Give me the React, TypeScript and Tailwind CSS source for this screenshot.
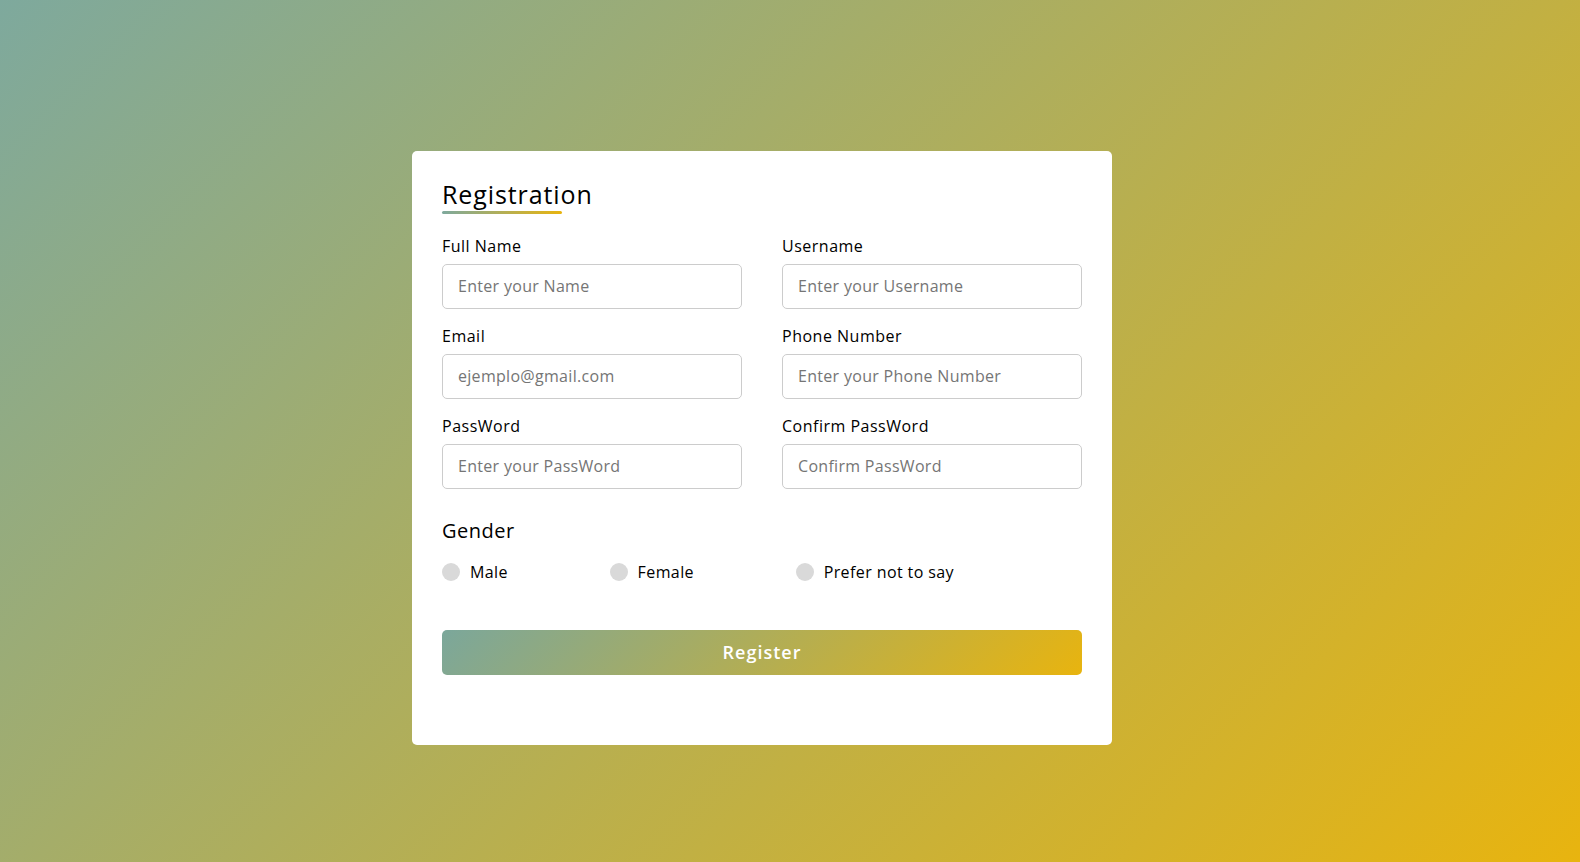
import React from 'react';

const font = { fontFamily: '"Open Sans", "Noto Sans", sans-serif' };

interface Field {
  label: string;
  placeholder: string;
}

const fields: Field[] = [
  { label: 'Full Name', placeholder: 'Enter your Name' },
  { label: 'Username', placeholder: 'Enter your Username' },
  { label: 'Email', placeholder: 'ejemplo@gmail.com' },
  { label: 'Phone Number', placeholder: 'Enter your Phone Number' },
  { label: 'PassWord', placeholder: 'Enter your PassWord' },
  { label: 'Confirm PassWord', placeholder: 'Confirm PassWord' },
];

const genders = ['Male', 'Female', 'Prefer not to say'];

export default function App() {
  return (
    <div
      className="min-h-screen w-full bg-[linear-gradient(135deg,#7ea99d,#e8b40f)] flex justify-center items-start pt-[151px] pr-[56px]"
      style={font}
    >
      <div className="w-[700px] bg-white rounded-[5px] px-[30px] pt-[25px] pb-[70px]">
        <div className="relative inline-block text-[25px] font-medium leading-[37.5px] tracking-[0.9px] text-black">
          Registration
          <span className="absolute left-0 bottom-[0px] h-[3px] w-[120px] rounded-[3px] bg-[linear-gradient(90deg,#7ea99d,#e8b40f)]" />
        </div>

        <form className="mt-[20px]">
          <div className="grid grid-cols-2 gap-x-[40px] gap-y-[15px]">
            {fields.map((f) => (
              <div key={f.label} className="flex flex-col">
                <span className="text-[16px] font-medium leading-[24px] tracking-[0.5px] mb-[6px] text-black">{f.label}</span>
                <input
                  type="text"
                  placeholder={f.placeholder}
                  className="h-[45px] w-full rounded-[5px] border border-[#ccc] pl-[15px] text-[16px] tracking-[0.3px] outline-none placeholder:text-[#757575]"
                  style={font}
                />
              </div>
            ))}
          </div>

          <div className="mt-[27px] text-[20px] font-medium leading-[30px] tracking-[0.5px] text-black">Gender</div>
          <div className="mt-[14px] w-[80%] flex justify-between">
            {genders.map((g) => (
              <label key={g} className="flex items-center text-[16px] leading-[24px] tracking-[0.4px] text-black">
                <span className="h-[18px] w-[18px] rounded-full bg-[#d9d9d9] mr-[10px]" />
                {g}
              </label>
            ))}
          </div>

          <button
            type="button"
            className="mt-[46px] h-[45px] w-full rounded-[5px] bg-[linear-gradient(135deg,#7ba79b,#e8b40f)] text-white text-[18px] font-semibold tracking-[1px]"
            style={font}
          >
            Register
          </button>
        </form>
      </div>
    </div>
  );
}
